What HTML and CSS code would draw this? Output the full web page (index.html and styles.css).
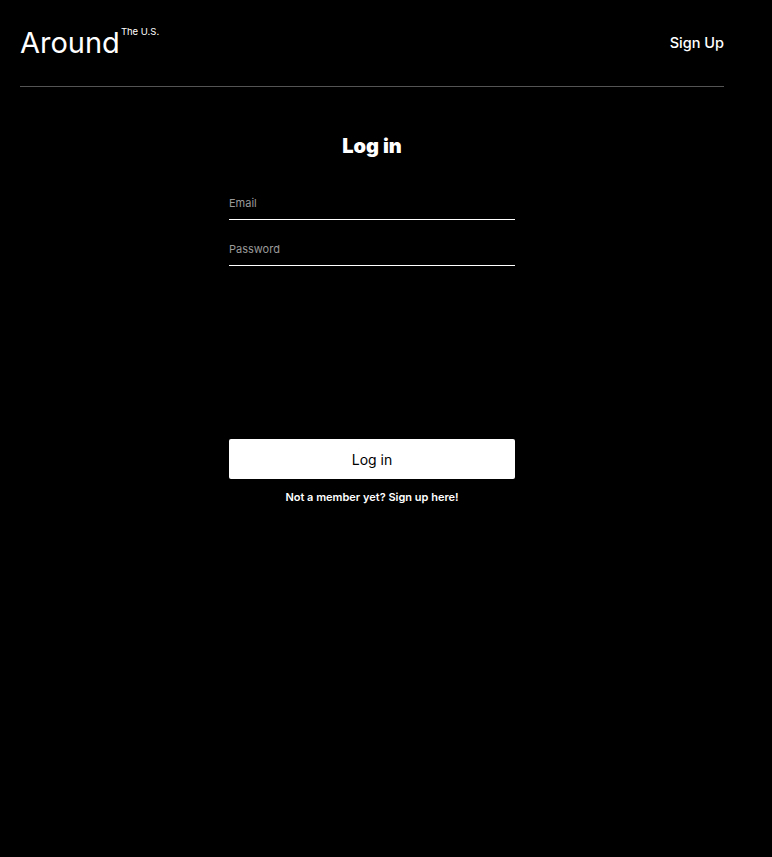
FILE: index.html
```html
<!DOCTYPE html>
<html lang="en">
<head>
    <meta charset="UTF-8">
    <meta name="viewport" content="width=device-width, initial-scale=1.0">
    <title>Log in - Around The U.S.</title>
    <link rel="stylesheet" href="styles.css">
</head>
<body>
    <div class="page">
        <header class="header">
            <div class="logo">
                <span class="logo-main">Around</span>
                <span class="logo-sub">The U.S.</span>
            </div>
            <a href="#" class="header-link">Sign Up</a>
        </header>

        <main class="auth">
            <h2 class="auth-title">Log in</h2>
            <form class="auth-form">
                <input type="email" class="auth-input" placeholder="Email">
                <input type="password" class="auth-input" placeholder="Password">
                <button type="submit" class="auth-btn">Log in</button>
                <a href="#" class="auth-link">Not a member yet? Sign up here!</a>
            </form>
        </main>
    </div>
</body>
</html>
```

FILE: styles.css
```css
* {
    margin: 0;
    padding: 0;
    box-sizing: border-box;
    font-family: 'Inter', 'Liberation Sans', sans-serif;
}

body {
    background-color: #000;
    color: #fff;
    min-height: 857px;
}

.page {
    padding: 0 48px 0 20px;
}

.header {
    display: flex;
    justify-content: space-between;
    align-items: flex-start;
    height: 87px;
    padding-top: 26px;
    border-bottom: 1px solid #545454;
}

.logo {
    display: flex;
    align-items: flex-start;
}

.logo-main {
    font-size: 29px;
    line-height: 34px;
}

.logo-sub {
    font-size: 9.5px;
    line-height: 11px;
    margin-left: 1px;
}

.header-link {
    color: #fff;
    text-decoration: none;
    font-size: 14.5px;
    font-weight: 500;
    line-height: 20px;
    margin-top: 7px;
}

.auth {
    display: flex;
    flex-direction: column;
    align-items: center;
    padding-top: 47px;
}

.auth-title {
    font-size: 20px;
    font-weight: 900;
    line-height: 24px;
    margin-bottom: 36px;
}

.auth-form {
    width: 286px;
    display: flex;
    flex-direction: column;
}

.auth-input {
    background: transparent;
    border: none;
    border-bottom: 1px solid #fff;
    color: #fff;
    font-size: 11px;
    height: 26px;
    padding: 0 0 8px;
    outline: none;
    margin-bottom: 20px;
}

.auth-input::placeholder {
    color: #9a9a9a;
}

.auth-btn {
    margin-top: 153px;
    height: 40px;
    background: #fff;
    color: #000;
    border: none;
    border-radius: 2px;
    font-size: 14px;
    cursor: pointer;
}

.auth-link {
    margin-top: 11px;
    text-align: center;
    color: #fff;
    text-decoration: none;
    font-size: 11px;
    font-weight: 600;
}
```
